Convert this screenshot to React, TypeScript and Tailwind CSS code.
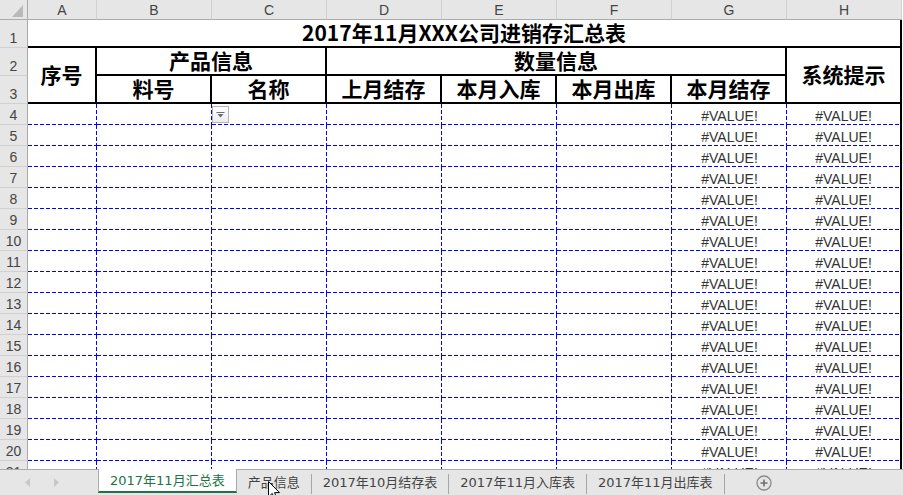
import React from "react";

const COLS = ["A", "B", "C", "D", "E", "F", "G", "H"];

const colHdr =
  "flex items-center justify-center bg-[#e6e6e6] border-r border-b border-r-[#d0d0d0] border-b-[#ababab] text-[14px] leading-4 text-[#444] pt-px";
const rowHdr =
  "flex items-end justify-center bg-[#e6e6e6] border-r border-b border-r-[#ababab] border-b-[#d0d0d0] text-[14px] leading-4 text-[#444] pb-px";
const hdrLabel =
  "flex items-center justify-center border-r-2 border-b-2 border-black text-[21px] font-bold text-black [font-family:'Noto_Sans_CJK_SC',sans-serif]";
const dashCell =
  "[background:linear-gradient(to_right,#0000ff_4px,transparent_4px)_0_100%/6px_1px_repeat-x,linear-gradient(to_bottom,#0000ff_4px,transparent_4px)_100%_0/1px_6px_repeat-y]";
const dashBottom =
  "[background:linear-gradient(to_right,#0000ff_4px,transparent_4px)_0_100%/6px_1px_repeat-x] border-r-2 border-black";

function DataRow({ n }: { n: number }) {
  return (
    <>
      <div className={rowHdr}>{n}</div>
      <div className={dashCell} />
      <div className={dashCell} />
      <div className={`relative ${dashCell}`}>
        {n === 4 && (
          <div className="absolute left-0 top-[2px] w-[17px] h-[17px] border border-[#b5b5b5] bg-[linear-gradient(to_bottom,#ffffff,#ececec)] flex items-center justify-center">
            <svg width="9" height="6" viewBox="0 0 9 6">
              <rect x="0.5" y="0" width="8" height="1" fill="#6b6b80" />
              <polygon points="1.5,2 7.5,2 4.5,5.5" fill="#6b6b80" />
            </svg>
          </div>
        )}
      </div>
      <div className={dashCell} />
      <div className={dashCell} />
      <div className={dashCell} />
      <div className={`flex items-end justify-center text-[14px] leading-4 text-[#333] pb-[1px] ${dashCell}`}>
        #VALUE!
      </div>
      <div className={`flex items-end justify-center text-[14px] leading-4 text-[#333] pb-[1px] ${dashBottom}`}>
        #VALUE!
      </div>
    </>
  );
}

function Separator() {
  return <div className="w-px h-[20px] mt-[4px] bg-[#a6a6a6] shrink-0" />;
}

export default function App() {
  const rows = Array.from({ length: 18 }, (_, i) => i + 4);
  return (
    <div className="relative w-[903px] h-[495px] overflow-hidden bg-white flex flex-col [font-family:'Liberation_Sans','Noto_Sans_CJK_SC',sans-serif]">
      <div className="h-[469px] overflow-hidden shrink-0">
        <div className="grid grid-cols-[28px_69px_repeat(7,115px)] grid-rows-[20px_28px_28px_28px_repeat(18,21px)]">
          <div className="relative bg-[#e6e6e6] border-r border-b border-[#ababab]">
            <svg className="absolute right-[4px] bottom-[2px]" width="11" height="12" viewBox="0 0 11 12">
              <polygon points="11,0 11,12 0,12" fill="#b9b9b9" />
            </svg>
          </div>
          {COLS.map((c) => (
            <div key={c} className={colHdr}>
              {c}
            </div>
          ))}

          <div className={rowHdr}>1</div>
          <div className="col-span-8 flex items-center justify-center border-r-2 border-b-2 border-black text-[21px] font-bold text-black [font-family:'Noto_Sans_CJK_SC',sans-serif]">
            2017年11月XXX公司进销存汇总表
          </div>

          <div className={rowHdr}>2</div>
          <div className={`row-span-2 ${hdrLabel}`}>序号</div>
          <div className={`col-span-2 ${hdrLabel}`}>产品信息</div>
          <div className={`col-span-4 ${hdrLabel}`}>数量信息</div>
          <div className={`row-span-2 ${hdrLabel}`}>系统提示</div>

          <div className={rowHdr}>3</div>
          <div className={hdrLabel}>料号</div>
          <div className={hdrLabel}>名称</div>
          <div className={hdrLabel}>上月结存</div>
          <div className={hdrLabel}>本月入库</div>
          <div className={hdrLabel}>本月出库</div>
          <div className={hdrLabel}>本月结存</div>

          {rows.map((n) => (
            <DataRow key={n} n={n} />
          ))}
        </div>
      </div>

      <div className="h-[26px] shrink-0 bg-[#e6e6e6] border-t border-[#ababab] flex items-start text-[13px] text-[#444] [font-family:'DejaVu_Sans','Noto_Sans_CJK_SC',sans-serif]">
        <div className="w-[98px] h-[25px] flex items-center shrink-0">
          <svg className="ml-[25px]" width="5" height="9" viewBox="0 0 5 9">
            <polygon points="5,0 5,9 0,4.5" fill="#c8c8c8" />
          </svg>
          <svg className="ml-[24px]" width="5" height="9" viewBox="0 0 5 9">
            <polygon points="0,0 0,9 5,4.5" fill="#c8c8c8" />
          </svg>
        </div>
        <div className="-mt-px h-[24px] flex items-center px-[11px] pt-[2px] bg-white border-l border-r border-[#ababab] border-b-2 border-b-[#217346] text-[#217346] shrink-0 whitespace-nowrap">
          2017年11月汇总表
        </div>
        <div className="h-[24px] flex items-center px-[11px] pt-[1px] shrink-0 whitespace-nowrap">产品信息</div>
        <Separator />
        <div className="h-[24px] flex items-center px-[11px] pt-[1px] shrink-0 whitespace-nowrap">2017年10月结存表</div>
        <Separator />
        <div className="h-[24px] flex items-center px-[11px] pt-[1px] shrink-0 whitespace-nowrap">2017年11月入库表</div>
        <Separator />
        <div className="h-[24px] flex items-center px-[11px] pt-[1px] shrink-0 whitespace-nowrap">2017年11月出库表</div>
        <Separator />
        <svg className="ml-[31px] mt-[5px] shrink-0" width="16" height="16" viewBox="0 0 16 16">
          <circle cx="8" cy="8" r="7" fill="none" stroke="#8a8a8a" strokeWidth="1.3" />
          <path d="M8 4.5v7M4.5 8h7" stroke="#6e6e6e" strokeWidth="1.6" />
        </svg>
      </div>

      <svg className="absolute left-[268px] top-[481px]" width="13" height="19" viewBox="0 0 13 19">
        <path d="M0.5 0.5 L0.5 16 L4.2 12.4 L6.8 18.2 L9 17.2 L6.5 11.6 L11.5 11.6 Z" fill="#fff" stroke="#000" strokeWidth="1" strokeLinejoin="round" />
      </svg>
    </div>
  );
}
